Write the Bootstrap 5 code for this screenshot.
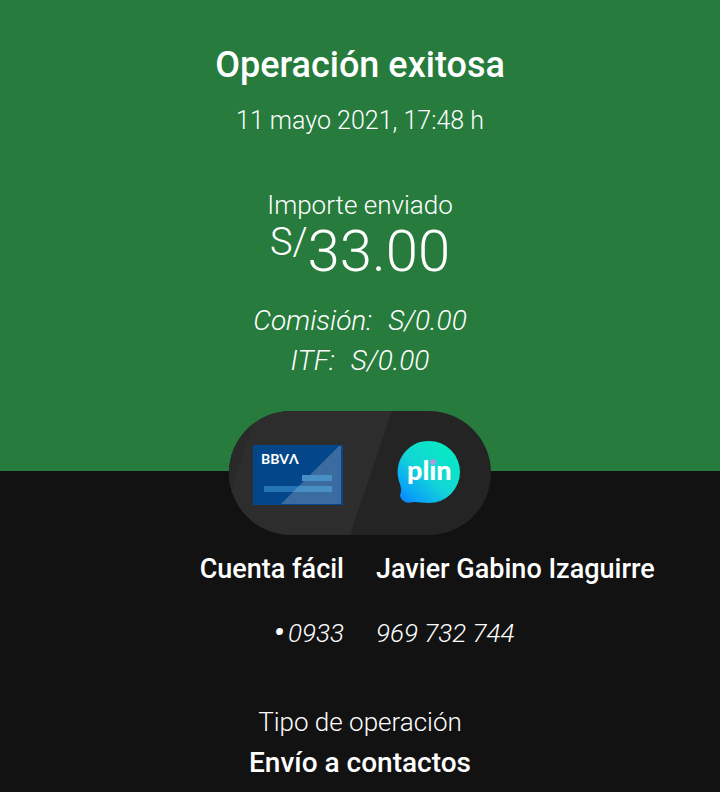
<!DOCTYPE html>
<html lang="es">
<head>
<meta charset="utf-8">
<meta name="viewport" content="width=device-width, initial-scale=1">
<title>Operación exitosa</title>
<link href="https://cdn.jsdelivr.net/npm/bootstrap@5.3.0/dist/css/bootstrap.min.css" rel="stylesheet">
<style>
body { background: #121212; color: #fff; font-family: Roboto, "Liberation Sans", sans-serif; font-size: 26px; line-height: 32px; font-weight: 300; }
.success-head { background: #267b3d; padding: 43px 16px 94px; }
.head-title { font-size: 36px; line-height: 44px; font-weight: 500; margin-bottom: 18px; }
.head-date { font-size: 25px; }
.sent-label { margin-top: 52px; }
.amount { font-size: 58px; line-height: 60px; }
.amount-unit { font-size: 38px; line-height: 42px; }
.fees { margin-top: 24px; font-size: 28px; }
.strong-text { font-size: 27px; font-weight: 500; }
.transfer-pill { width: 262px; height: 124px; margin: -60px auto 18px; }
.numbers { margin-top: 32px; }
.account-dot { font-size: 28px; font-weight: 900; }
.kind { margin-top: 57px; }
.kind-value { font-size: 28px; line-height: 34px; }
</style>
<script src="https://cdn.jsdelivr.net/npm/bootstrap@5.3.0/dist/js/bootstrap.bundle.min.js"></script>
</head>
<body>
<header class="success-head text-center">
  <h1 class="head-title">Operación exitosa</h1>
  <p class="head-date mb-0">11 mayo 2021, 17:48 h</p>
  <p class="sent-label mb-0">Importe enviado</p>
  <div class="amount d-flex justify-content-center align-items-start"><span class="amount-unit">S/</span><span>33.00</span></div>
  <div class="fees fst-italic d-flex flex-column gap-2">
    <div class="d-flex justify-content-center gap-3"><span>Comisión:</span><span>S/0.00</span></div>
    <div class="d-flex justify-content-center gap-3"><span>ITF:</span><span>S/0.00</span></div>
  </div>
</header>
<main>
  <svg class="transfer-pill d-block position-relative" viewBox="0 0 262 124" role="img" aria-label="BBVA a Plin">
    <defs>
      <clipPath id="pill"><rect width="262" height="124" rx="62"/></clipPath>
      <linearGradient id="bubble" x1="0" y1="1" x2=".8" y2=".1"><stop offset="0" stop-color="#0878ff"/><stop offset=".2" stop-color="#0aa2f8"/><stop offset=".55" stop-color="#12d6d6"/><stop offset="1" stop-color="#08e8c4"/></linearGradient>
    </defs>
    <g clip-path="url(#pill)">
      <rect width="262" height="124" fill="#242424"/>
      <path d="M0 0H163L121 124H0Z" fill="#2d2d2d"/>
      <path d="M0 0H28L0 84Z" fill="#292929"/>
    </g>
    <rect x="24" y="34" width="90" height="60" fill="#04468a"/>
    <path d="M112 35V93H52L110 35Z" fill="#3a6c9f"/>
    <rect x="73" y="64" width="30" height="6" fill="#478fc4"/>
    <rect x="35" y="75" width="68" height="6" fill="#2473b4"/>
    <path d="M70 75H103V81H64Z" fill="#478fc4"/>
    <text x="32" y="53" font-family="Lato, sans-serif" font-size="14" font-weight="700" fill="#fff">BBVΛ</text>
    <path d="M200 30a31 31 0 1 1 0 62c-6 0-10-1-15-1c-5 1-7 1-9 0c-3-2-5-4-5-7c2-4 1-7 0-11a31 31 0 0 1 29-43Z" fill="url(#bubble)"/>
    <text x="178" y="69" font-family="Lato, sans-serif" font-size="27" font-weight="900" fill="#fff">plin</text>
    <circle cx="204" cy="51" r="3" fill="#a99be0"/>
  </svg>
  <div class="row g-0 strong-text">
    <div class="col-6 px-3 text-end">Cuenta fácil</div>
    <div class="col-6 px-3 text-nowrap">Javier Gabino Izaguirre</div>
  </div>
  <div class="row g-0 numbers fst-italic">
    <div class="col-6 px-3 text-end"><span class="account-dot me-1">•</span>0933</div>
    <div class="col-6 px-3">969 732 744</div>
  </div>
  <p class="kind text-center mb-2">Tipo de operación</p>
  <p class="kind-value strong-text text-center mb-1">Envío a contactos</p>
</main>
</body>
</html>
